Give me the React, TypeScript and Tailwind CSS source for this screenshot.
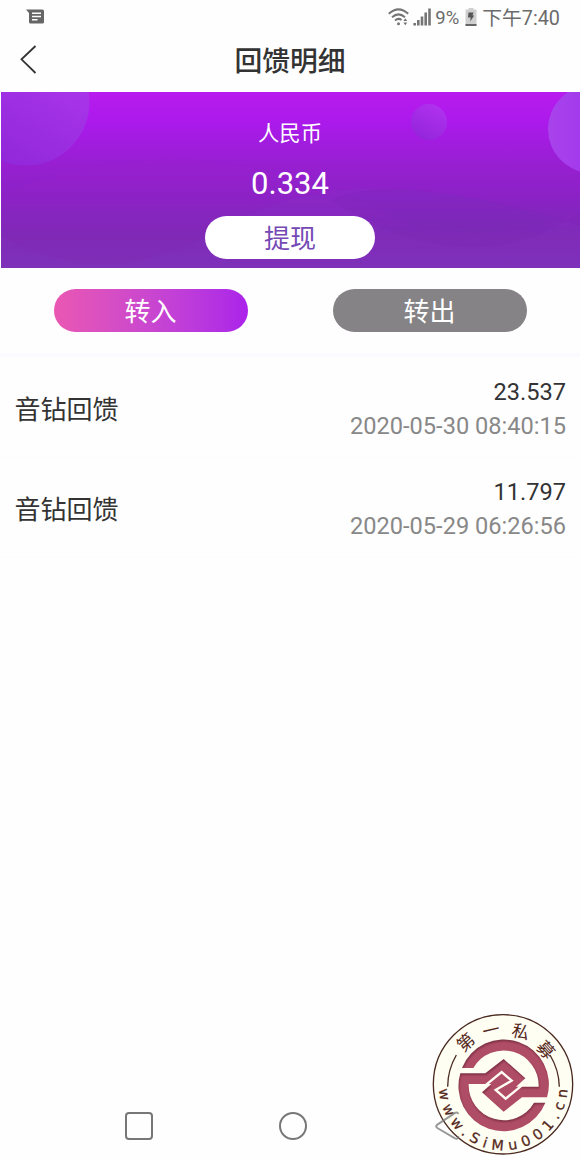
import React from 'react';

// ============================================================================
// Types
// ============================================================================

interface RewardRecord {
  title: string;
  amount: string;
  time: string;
}

const RECORDS: RewardRecord[] = [
  { title: '音钻回馈', amount: '23.537', time: '2020-05-30 08:40:15' },
  { title: '音钻回馈', amount: '11.797', time: '2020-05-29 06:26:56' },
];

// Two interlocking halves of the seal's emblem
const MARK_PATH =
  'M12 100A135 135 0 0 1 267 188H192L137 231L72 173L100 148H32.1A105 105 0 0 0 228 204H262A135 135 0 0 1 7 116H82L137 73L202 131L174 156H241.9A105 105 0 0 0 46 100Z';

// ============================================================================
// Main Component
// ============================================================================

export default function App() {
  return (
    <div className="relative flex h-[1160px] w-[580px] flex-col overflow-hidden bg-[#fefefe] font-['Roboto','Noto_Sans_CJK_SC',sans-serif] text-[#333]">
      <StatusBar />
      <TitleBar />
      <BalanceBanner />

      {/* Tabs */}
      <div className="flex h-[85px] shrink-0 items-start justify-between pt-[21px] pr-[53.5px] pl-[53.5px]">
        <button className="h-[42.5px] w-[194px] rounded-full bg-linear-to-r from-[#ea57b2] to-[#ab22ea] pt-[4px] text-[26px] leading-[38px] text-white">
          转入
        </button>
        <button className="h-[42.5px] w-[194px] rounded-full bg-[#858385] pt-[4px] text-[26px] leading-[38px] text-white">
          转出
        </button>
      </div>
      <div className="h-1 shrink-0 bg-[#fbfaff]" />

      {/* Records */}
      <div className="flex-1">
        {RECORDS.map((record) => (
          <RecordRow key={record.time} record={record} />
        ))}
      </div>

      <NavBar />
      <SiteSeal />
    </div>
  );
}

// ============================================================================
// Sub-components
// ============================================================================

function StatusBar() {
  return (
    <div className="flex h-[34px] shrink-0 items-center pr-5 pl-[26px] text-[#6b6b6b]">
      <svg className="h-4 w-[19px]" viewBox="0 0 19 16">
        <path d="M0 .5H16.5Q18 .5 18 2V13Q18 14.5 16.5 14.5H4.5Q3 14.5 3 13V4Z" fill="#666" />
        <path d="M6 4.3H15M6 7.5H15M6 10.7H11.5" stroke="#fefefe" strokeWidth="1.5" />
      </svg>
      <div className="ml-auto flex h-full items-center">
        <svg className="h-[18px] w-[21px]" viewBox="0 0 21 18" fill="none" stroke="#757575" strokeWidth="2">
          <path d="M.8 5.8Q10.5-3 20.2 5.8M4 9.3Q10.5 3.5 17 9.3M7 12.6Q10.5 9.5 13.5 12" />
          <circle cx="10.5" cy="15.7" r="1.5" fill="#757575" stroke="none" />
          <path d="M15.3 13L17.3 10.3 19.3 13ZM15.3 14.5L17.3 17.2 19.3 14.5Z" fill="#757575" stroke="none" />
        </svg>
        <svg className="ml-1 h-[18px] w-[19px]" viewBox="0 0 19 18" stroke="#757575" strokeWidth="2.6">
          <path d="M1.7 15V17.5M5.3 12V17.5M9 8.5V17.5M12.7 4.5V17.5M16.5 .5V17.5" />
        </svg>
        <span className="ml-[3px] pt-[2px] text-[18.5px] leading-none">9%</span>
        <svg className="ml-[6px] h-[18px] w-3" viewBox="0 0 12 18">
          <path d="M3.5 0H8.5V1.5H11.5V18H.5V1.5H3.5Z" fill="#cfcfcf" />
          <path d="M.5 16H11.5V18H.5Z" fill="#666" />
          <path d="M3.5 4.5H8.5L7.5 7.5H9.2L5.2 13.5 5.7 9.5H3Z" fill="#555" />
        </svg>
        <span className="ml-[5px] pt-[3px] text-[19.8px] leading-none">下午7:40</span>
      </div>
    </div>
  );
}

function TitleBar() {
  return (
    <div className="relative flex h-[58px] shrink-0 items-center justify-center pb-[2px]">
      <svg className="absolute top-[11px] left-[20px] h-[29px] w-[17px]" viewBox="0 0 17 29" fill="none" stroke="#333" strokeWidth="1.8">
        <path d="M15.5 1L1.5 14.3 15.5 28" />
      </svg>
      <h1 className="text-[27.8px] leading-none font-medium">回馈明细</h1>
    </div>
  );
}

function BalanceBanner() {
  return (
    <div className="relative ml-px h-[176px] shrink-0 overflow-hidden text-white">
      <svg className="absolute inset-0 h-full w-full" viewBox="0 0 579 176">
        <defs>
          <linearGradient id="base" x1="0" y1="0" x2="0" y2="1">
            <stop offset="0" stopColor="#b91bee" />
            <stop offset=".18" stopColor="#aa1aeb" />
            <stop offset=".4" stopColor="#981fd2" />
            <stop offset=".6" stopColor="#8a22c5" />
            <stop offset=".8" stopColor="#7c29b5" />
            <stop offset="1" stopColor="#7a30b5" />
          </linearGradient>
          <linearGradient id="bubble" x1=".9" y1=".1" x2=".4" y2="1">
            <stop offset="0" stopColor="#b038ef" />
            <stop offset="1" stopColor="#9128d9" />
          </linearGradient>
          <linearGradient id="edge" x1="0" y1="0" x2="1" y2="0">
            <stop offset="0" stopColor="#a843ec" />
            <stop offset="1" stopColor="#9d2cec" />
          </linearGradient>
        </defs>
        <rect width="579" height="176" fill="url(#base)" />
        <path d="M0 102Q70 72 170 67Q300 72 400 130Q490 155 579 120V176H0Z" fill="#a52bd0" opacity=".1" />
        <path d="M0 145Q50 172 110 172Q170 168 240 126Q310 92 400 97Q480 102 579 134V176H0Z" fill="#8140c4" opacity=".14" />
        <path d="M330 108Q400 155 470 155Q530 155 579 120V134Q480 102 400 97Q355 96 330 108Z" fill="#7420b0" opacity=".15" />
        <circle cx="25" cy="10" r="63.5" fill="url(#bubble)" />
        <circle cx="428" cy="30" r="18" fill="url(#bubble)" opacity=".8" />
        <circle cx="591" cy="37" r="44" fill="url(#edge)" />
      </svg>
      <div className="relative flex flex-col items-center pt-[30px] pr-px">
        <div className="text-[21.3px] leading-[24px]">人民币</div>
        <div className="mt-[21px] text-[31px] leading-[34px]">0.334</div>
        <button className="mt-[15px] h-[42.5px] w-[170px] rounded-full bg-white pt-[4px] text-[26px] leading-[38px] text-[#7449b5]">
          提现
        </button>
      </div>
    </div>
  );
}

function RecordRow({ record }: { record: RewardRecord }) {
  return (
    <div className="flex h-[100.5px] items-center justify-between border-b border-[#fcfbfd] pt-1 pr-[14px] pl-[14.5px]">
      <div className="pt-[2px] text-[26px] leading-none">{record.title}</div>
      <div className="text-right">
        <div className="text-[23.6px] leading-[34px]">{record.amount}</div>
        <div className="text-[23.6px] leading-[34px] text-[#888]">{record.time}</div>
      </div>
    </div>
  );
}

function NavBar() {
  return (
    <div className="flex h-[68px] shrink-0 items-center pl-[125px]">
      <div className="size-[28px] rounded-[4px] border-2 border-[#777]" />
      <div className="ml-[126px] size-[28px] rounded-full border-2 border-[#777]" />
    </div>
  );
}

/** Round site seal in the bottom corner, lying over the back key */
function SiteSeal() {
  return (
    <svg className="absolute top-[1005px] left-[425px] size-[155px]" viewBox="0 0 465 465">
      <defs>
        <path id="urlArc" d="M42 243A193 193 0 0 0 428 243" />
        <filter id="soft">
          <feGaussianBlur stdDeviation="2.5" />
        </filter>
        <mask id="markMask" maskUnits="userSpaceOnUse" x="-10" y="0" width="300" height="300">
          <path d={MARK_PATH} fill="#fff" />
          <path d="M82 152L131 112L161 138L113 166L143 192L192 152" fill="none" stroke="#000" strokeWidth="7" />
        </mask>
      </defs>
      <circle cx="234" cy="238" r="209" fill="#fffef3" stroke="#4a2a20" strokeWidth="4" />
      <path d="M68 245Q68 195 94 150M403 245Q402 195 375 150" fill="none" stroke="#4a2a20" strokeWidth="4" />

      <g transform="translate(99 89)">
        <g mask="url(#markMask)">
          <rect x="-10" y="0" width="300" height="300" fill="#7c3045" />
          <path d={MARK_PATH} fill="#b04d66" filter="url(#soft)" transform="translate(2 5)" />
        </g>
      </g>

      <g fill="#54281b" fontFamily="'Noto Sans CJK SC', sans-serif" fontSize="52" textAnchor="middle">
        <text transform="translate(122 112) rotate(-42)" y="19">第</text>
        <text transform="translate(198 75) rotate(-13)" y="19">一</text>
        <text transform="translate(287 80) rotate(14)" y="19">私</text>
        <text transform="translate(362 134) rotate(48)" y="19">募</text>
      </g>
      <text fill="#54281b" stroke="#54281b" strokeWidth=".8" fontFamily="'DejaVu Sans', sans-serif" fontSize="43">
        <textPath href="#urlArc" startOffset="10" textLength="586">
          www.SiMu001.cn
        </textPath>
      </text>

      <path d="M100 327Q97 319 88 325L37 359Q30 364 37 369L90 400Q100 404 100 394" fill="none" stroke="#777" strokeOpacity=".75" strokeWidth="6" />
    </svg>
  );
}
